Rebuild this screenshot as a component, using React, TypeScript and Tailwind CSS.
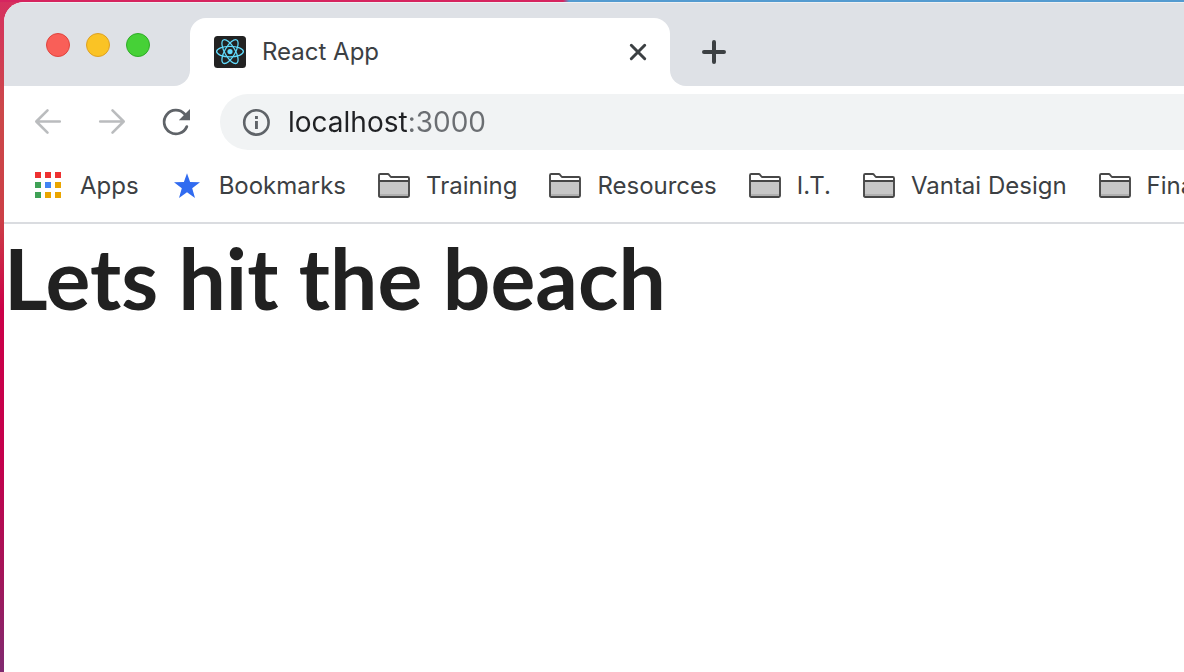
import React from "react";

const folders = ["Training", "Resources", "I.T.", "Vantai Design", "Finance"];

function ReactLogo() {
  return (
    <svg viewBox="0 0 32 32" className="size-8 shrink-0" aria-hidden="true">
      <rect width="32" height="32" rx="3.5" fill="#222222" />
      <circle cx="16" cy="15.6" r="2.6" fill="#61dafb" />
      <g fill="none" stroke="#61dafb" strokeWidth="1.3">
        <ellipse cx="16" cy="15.6" rx="13.4" ry="5.2" />
        <ellipse cx="16" cy="15.6" rx="13.4" ry="5.2" transform="rotate(60 16 15.6)" />
        <ellipse cx="16" cy="15.6" rx="13.4" ry="5.2" transform="rotate(120 16 15.6)" />
      </g>
    </svg>
  );
}

function ArrowIcon({ flipped = false }: { flipped?: boolean }) {
  return (
    <svg viewBox="0 0 32 32" className="size-8" fill="none" stroke="#babcbe" strokeWidth="2.6" strokeLinecap="round" strokeLinejoin="round" aria-hidden="true">
      {flipped ? <path d="M4.2 15.5H27.5M16.5 4.3L27.7 15.5L16.5 26.7" /> : <path d="M27.8 15.5H4.5M15.5 4.3L4.3 15.5L15.5 26.7" />}
    </svg>
  );
}

function ReloadIcon() {
  return (
    <svg viewBox="0 0 32 32" className="size-8" aria-hidden="true">
      <path d="M26.8 20.6A11.8 11.8 0 1 1 24.6 8" fill="none" stroke="#5f6368" strokeWidth="2.8" strokeLinecap="round" />
      <path d="M30 3V14.2H18.8Z" fill="#5f6368" />
    </svg>
  );
}

function InfoIcon() {
  return (
    <svg viewBox="0 0 28 28" className="size-7" aria-hidden="true">
      <circle cx="14.4" cy="14.4" r="12.2" fill="none" stroke="#5f6368" strokeWidth="2.6" />
      <path d="M13 8h2.9v2.9h-2.9zM13 13h2.9v8h-2.9z" fill="#5f6368" />
    </svg>
  );
}

function AppsIcon() {
  const colors = ["#ee3131", "#ee3131", "#ee3131", "#3fa156", "#4285f4", "#eaa500", "#3fa156", "#eaa500", "#eaa500"];
  return (
    <svg viewBox="0 0 26 26" className="mb-0.5 size-[26px] shrink-0" aria-hidden="true">
      {colors.map((c, i) => (
        <rect key={i} x={(i % 3) * 10} y={Math.floor(i / 3) * 10} width="6" height="6" fill={c} />
      ))}
    </svg>
  );
}

function StarIcon() {
  return (
    <svg viewBox="0 0 26 26" className="mb-0.5 size-[26px] shrink-0" aria-hidden="true">
      <path d="M13 1.2L16.1 10L26 10.2L18.2 16.3L21 26L13 20.3L5 26L7.8 16.3L0 10.2L9.9 10Z" fill="#316bf0" />
    </svg>
  );
}

function FolderIcon() {
  return (
    <svg viewBox="0 0 32 26" className="mb-0.5 h-[26px] w-8 shrink-0" aria-hidden="true">
      <path d="M1 9H31V25H1Z" fill="#c7c7c7" />
      <path d="M2 22H30V24H2Z" fill="#b0b0b0" />
      <path d="M1 23.8V3.2Q1 2 2.2 2H9.6Q10.6 2 11.2 3L12.2 4.2Q12.7 5 13.6 5H29.8Q31 5 31 6.2V23.8Q31 25 29.8 25H2.2Q1 25 1 23.8ZM1 9H31" fill="none" stroke="#474747" strokeWidth="1.9" />
    </svg>
  );
}

export default function App() {
  return (
    <div className="min-h-screen overflow-hidden bg-[linear-gradient(180deg,#d6305f_0px,#cc484a_110px,#cc3f46_220px,#cb0048_310px,#c4004c_460px,#a51458_570px,#802a70_672px)] font-[Inter,'Liberation_Sans',sans-serif] text-2xl text-[#3c4043]">
      <div className="h-0.5 bg-[linear-gradient(90deg,#d6245f_563px,#549bd0_569px)]" />
      <div className="ml-1 flex min-h-[calc(100vh-2px)] flex-col overflow-hidden rounded-tl-[20px] bg-white">
        <header>
          <div className="flex h-[84px]">
            <div className="flex w-[186px] shrink-0 gap-4 rounded-br-2xl border-t border-[#eef0f2] bg-[#dee1e6] pl-[42px] pt-[30px]">
              <button aria-label="Close window" className="size-6 rounded-full border border-[#e0443e] bg-[#f95f58]" />
              <button aria-label="Minimize window" className="size-6 rounded-full border border-[#dea123] bg-[#fac325]" />
              <button aria-label="Zoom window" className="size-6 rounded-full border border-[#2fac28] bg-[#46d137]" />
            </div>
            <div className="w-[480px] shrink-0 border-t border-[#eef0f2] bg-[#dee1e6] pt-[15px]">
              <div className="flex h-[68px] items-center gap-4 rounded-t-2xl bg-white px-6">
                <ReactLogo />
                <span className="flex-1">React App</span>
                <button aria-label="Close tab" className="-mr-1 flex size-6 items-center justify-center">
                  <svg viewBox="0 0 24 24" className="size-6" fill="none" stroke="#3c4043" strokeWidth="3" strokeLinecap="round" aria-hidden="true">
                    <path d="M5.3 5.3L18.7 18.7M18.7 5.3L5.3 18.7" />
                  </svg>
                </button>
              </div>
            </div>
            <div className="flex flex-1 items-center rounded-bl-2xl border-t border-[#eef0f2] bg-[#dee1e6] pl-8 pt-[15px]">
              <button aria-label="New tab" className="flex size-6">
                <svg viewBox="0 0 24 24" className="size-6" fill="none" stroke="#3c4043" strokeWidth="4" strokeLinecap="round" aria-hidden="true">
                  <path d="M12 2V22M2 12H22" />
                </svg>
              </button>
            </div>
          </div>

          <div className="flex h-[72px] items-center pl-7">
            <nav aria-label="Navigation" className="flex shrink-0 gap-8">
              <button aria-label="Back"><ArrowIcon /></button>
              <button aria-label="Forward"><ArrowIcon flipped /></button>
              <button aria-label="Reload"><ReloadIcon /></button>
            </nav>
            <div className="ml-7 flex h-14 min-w-0 flex-1 items-center rounded-l-full bg-[#f1f3f4] pl-[22px]">
              <button aria-label="Site information" className="mr-[18px] shrink-0"><InfoIcon /></button>
              <input
                aria-label="Address"
                defaultValue="localhost:3000"
                className="min-w-0 flex-1 bg-[linear-gradient(90deg,#202124_121px,#6b6e72_121px)] bg-clip-text text-[28px] leading-9 text-transparent caret-[#202124] outline-none"
              />
            </div>
          </div>

          <nav aria-label="Bookmarks bar" className="flex h-[66px] items-start gap-8 overflow-hidden whitespace-nowrap border-b-2 border-[#dadce0] pl-[31px] pt-3 leading-8">
            <a href="#apps" className="mr-[3px] flex shrink-0 items-center gap-[19px]"><AppsIcon />Apps</a>
            <a href="#bookmarks" className="flex shrink-0 items-center gap-[19px]"><StarIcon />Bookmarks</a>
            {folders.map((name) => (
              <a key={name} href="#folder" className="flex shrink-0 items-center gap-4"><FolderIcon />{name}</a>
            ))}
          </nav>
        </header>

        <main>
          <h1 className="font-[Lato,sans-serif] text-[84px] font-bold leading-[108px] text-[#212121]">Lets hit the beach</h1>
        </main>
      </div>
    </div>
  );
}
